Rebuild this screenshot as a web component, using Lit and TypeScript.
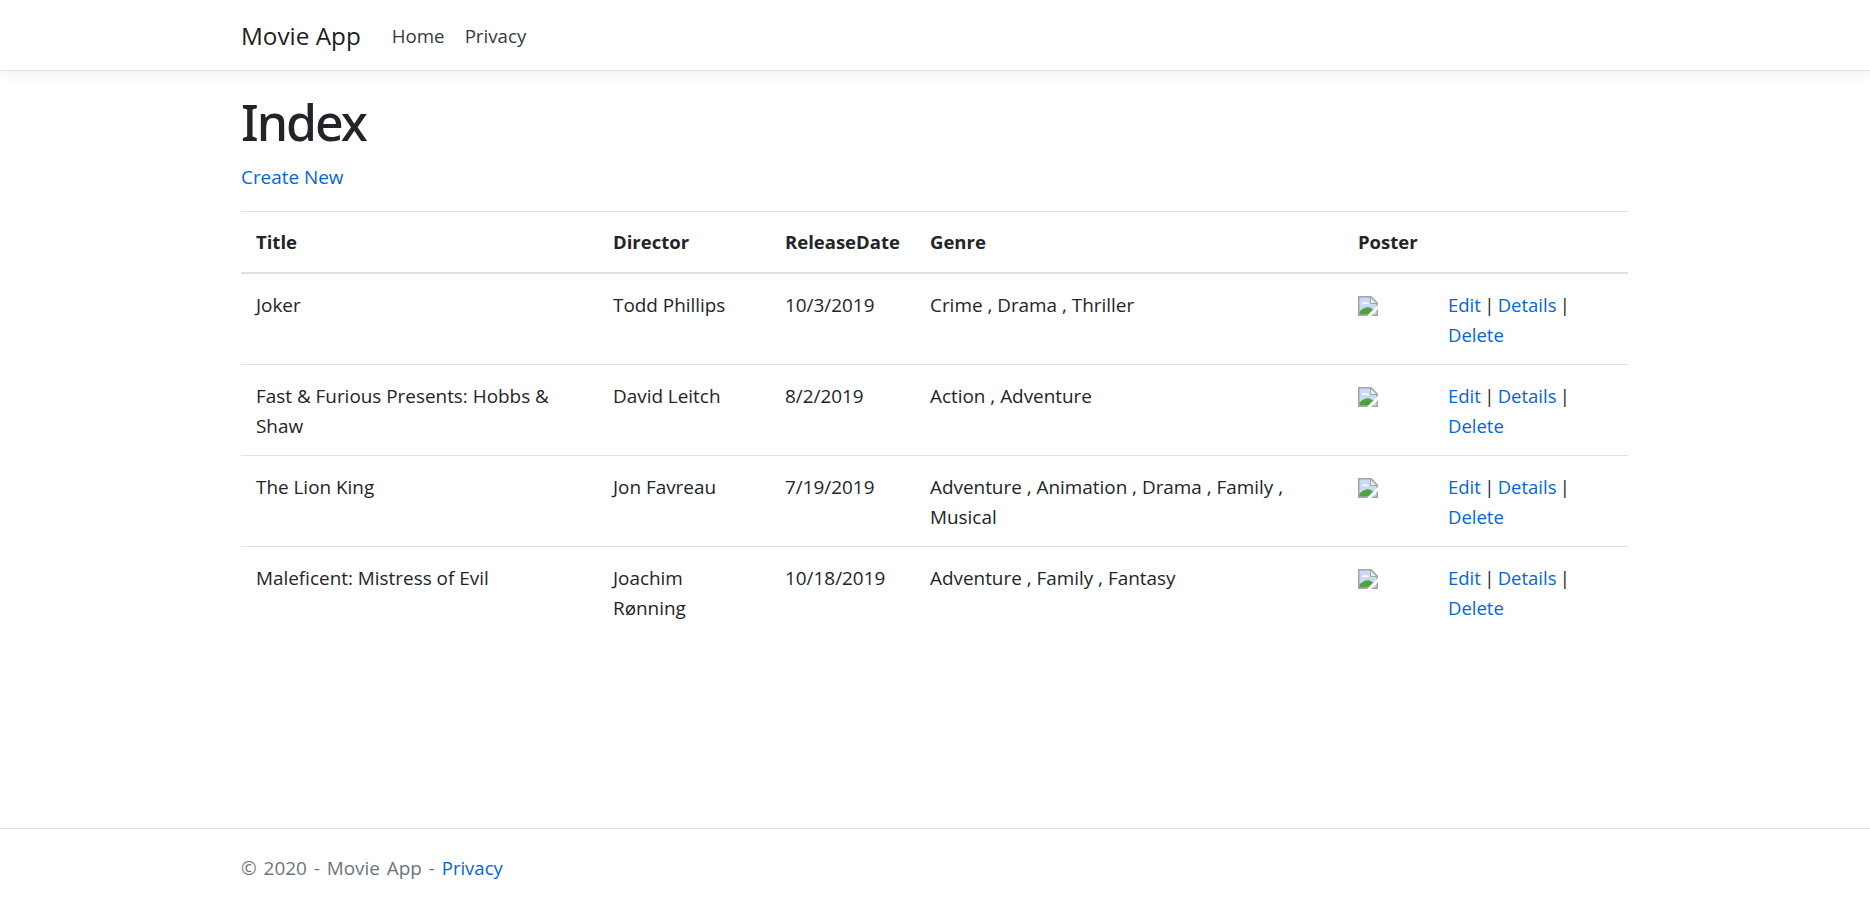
import { LitElement, css, html, svg } from 'lit';
import { customElement } from 'lit/decorators.js';

interface Movie {
  title: string;
  director: string;
  date: string;
  genre: string;
}

const movies: Movie[] = [
  { title: 'Joker', director: 'Todd Phillips', date: '10/3/2019', genre: 'Crime , Drama , Thriller' },
  { title: 'Fast & Furious Presents: Hobbs & Shaw', director: 'David Leitch', date: '8/2/2019', genre: 'Action , Adventure' },
  { title: 'The Lion King', director: 'Jon Favreau', date: '7/19/2019', genre: 'Adventure , Animation , Drama , Family , Musical' },
  { title: 'Maleficent: Mistress of Evil', director: 'Joachim Rønning', date: '10/18/2019', genre: 'Adventure , Family , Fantasy' },
];

// the browser's broken image placeholder
const brokenImage = svg`
  <svg class="poster" viewBox="0 0 20 20" width="20" height="20" aria-hidden="true">
    <path d="M0.75 0.75H13L19.25 7V19.25H0.75Z" fill="#c9daf6" stroke="#a4a4a4" stroke-width="1.5" />
    <path d="M4 8c0-2 3-3 4-1 1-1 3 0 3 1Z" fill="#fff" />
    <path d="M1.5 18.5v-3c3-3 7-5 10-4l4 2-5 5Z" fill="#4ea33c" />
    <path d="M12.5 1L19 7.5H12.5Z" fill="#eee" stroke="#a4a4a4" />
    <path d="M9 20L20 9V13L13 20Z" fill="#fff" />
  </svg>
`;

@customElement('app-root')
export class AppRoot extends LitElement {
  render() {
    return html`
      <header class="navbar">
        <div class="container nav-inner">
          <a class="brand">Movie App</a>
          <nav class="nav-links">
            <a>Home</a>
            <a>Privacy</a>
          </nav>
        </div>
      </header>
      <main class="container main">
        <h1>Index</h1>
        <p class="create"><a class="link">Create New</a></p>
        <table>
          <colgroup>
            <col class="c-title" />
            <col class="c-director" />
            <col class="c-date" />
            <col class="c-genre" />
            <col class="c-poster" />
            <col />
          </colgroup>
          <thead>
            <tr>
              <th>Title</th>
              <th>Director</th>
              <th>ReleaseDate</th>
              <th>Genre</th>
              <th>Poster</th>
              <th></th>
            </tr>
          </thead>
          <tbody>
            ${movies.map(
              (m) => html`
                <tr>
                  <td>${m.title}</td>
                  <td>${m.director}</td>
                  <td>${m.date}</td>
                  <td>${m.genre}</td>
                  <td>${brokenImage}</td>
                  <td class="actions">
                    <a class="link">Edit</a> | <a class="link">Details</a> |
                    <a class="link">Delete</a>
                  </td>
                </tr>
              `,
            )}
          </tbody>
        </table>
      </main>
      <footer class="footer">
        <div class="container">© 2020 - Movie App - <a class="link footer-link">Privacy</a></div>
      </footer>
    `;
  }

  static styles = css`
    :host {
      display: flex;
      flex-direction: column;
      min-height: 100vh;
      font-family: 'Open Sans', 'Noto Sans', sans-serif;
      font-size: 18.9px;
      line-height: 30px;
      color: #212529;
      background: #fff;
    }

    .container {
      box-sizing: border-box;
      width: 1418px;
      margin: 0 auto;
      padding: 0 15px;
    }

    .navbar {
      height: 70px;
      border-bottom: 1px solid #dee2e6;
      box-shadow: 0 5px 15px rgba(0, 0, 0, 0.05);
    }

    .nav-inner {
      display: flex;
      align-items: center;
      height: 100%;
      padding-top: 2px;
    }

    .brand {
      font-size: 24.3px;
      color: rgba(0, 0, 0, 0.9);
    }

    .nav-links {
      display: flex;
      gap: 20px;
      margin-left: 31px;
      font-size: 18.7px;
      color: #343a40;
    }

    .main {
      flex: 1;
    }

    h1 {
      margin: 21px 0 10px;
      font-family: 'Noto Sans', 'Open Sans', sans-serif;
      font-size: 50px;
      font-weight: 500;
      line-height: 60px;
      letter-spacing: -2px;
    }

    .create {
      margin: 0 0 19px;
    }

    .link {
      color: #0366d6;
    }

    table {
      width: 1387px;
      table-layout: fixed;
      border-collapse: collapse;
    }

    .c-title { width: 357px; }
    .c-director { width: 172px; }
    .c-date { width: 145px; }
    .c-genre { width: 428px; }
    .c-poster { width: 90px; }

    th,
    td {
      padding: 16px 15px 14px;
      text-align: left;
      vertical-align: top;
      border-top: 1px solid #dee2e6;
    }

    th {
      font-size: 18.5px;
      font-weight: 700;
      padding: 15px;
      border-bottom: 2px solid #dee2e6;
    }

    .actions {
      font-size: 18.5px;
      word-spacing: -1.5px;
    }

    .poster {
      display: block;
      margin-top: 6px;
    }

    .footer {
      height: 76px;
      border-top: 1px solid #dee2e6;
      color: #6c757d;
      line-height: 78px;
      word-spacing: 2px;
    }

    .footer-link {
      font-size: 18.5px;
    }
  `;
}
